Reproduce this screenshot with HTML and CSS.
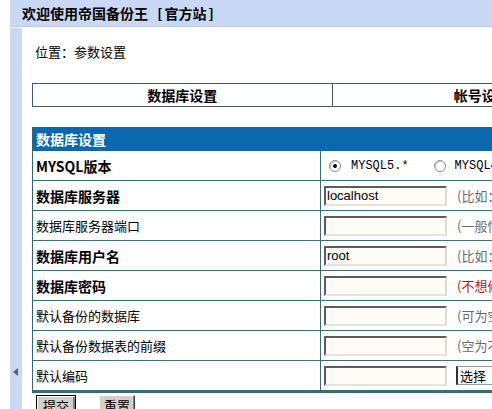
FILE: index.html
```html
<!DOCTYPE html>
<html lang="zh-CN">
<head>
<meta charset="utf-8">
<title>参数设置</title>
<link rel="stylesheet" href="styles.css">
</head>
<body>
<div class="frame">
  <div class="side-gap"></div>
  <div class="shell">
    <div class="topbar">欢迎使用帝国备份王 <span class="br">[</span>官方站<span class="br">]</span></div>
    <div class="main">
      <div class="rail"><span class="arrow"></span></div>
      <div class="content">
        <div class="loc">位置：参数设置</div>
        <div class="tabs">
          <div class="tab">数据库设置</div>
          <div class="tab">帐号设置</div>
        </div>
        <div class="form">
          <div class="form-head">数据库设置</div>
          <div class="row">
            <div class="lbl bold">MYSQL版本</div>
            <div class="val">
              <span class="radio checked"></span><span class="mono">MYSQL5.*</span>
              <span class="radio second"></span><span class="mono">MYSQL4.*</span>
            </div>
          </div>
          <div class="row">
            <div class="lbl bold">数据库服务器</div>
            <div class="val"><span class="field">localhost</span><span class="hint">(比如：localhost)</span></div>
          </div>
          <div class="row">
            <div class="lbl">数据库服务器端口</div>
            <div class="val"><span class="field"></span><span class="hint">(一般情况下为空即可)</span></div>
          </div>
          <div class="row">
            <div class="lbl bold">数据库用户名</div>
            <div class="val"><span class="field">root</span><span class="hint">(比如：root)</span></div>
          </div>
          <div class="row">
            <div class="lbl bold">数据库密码</div>
            <div class="val"><span class="field"></span><span class="hint red">(不想修改请留空)</span></div>
          </div>
          <div class="row">
            <div class="lbl">默认备份的数据库</div>
            <div class="val"><span class="field"></span><span class="hint">(可为空)</span></div>
          </div>
          <div class="row">
            <div class="lbl">默认备份数据表的前缀</div>
            <div class="val"><span class="field"></span><span class="hint">(空为不限)</span></div>
          </div>
          <div class="row">
            <div class="lbl">默认编码</div>
            <div class="val"><span class="field"></span><span class="select">选择</span></div>
          </div>
        </div>
        <div class="btns">
          <span class="btn default">提交</span>
          <span class="btn">重置</span>
        </div>
      </div>
    </div>
  </div>
</div>
</body>
</html>
```

FILE: styles.css
```css
html, body {
  margin: 0;
  padding: 0;
  width: 492px;
  height: 409px;
  overflow: hidden;
  background: #ffffff;
  font-family: "Noto Sans CJK SC", "Liberation Sans", sans-serif;
  font-size: 13px;
  color: #000;
}

.frame {
  display: flex;
  height: 409px;
}

.side-gap {
  flex: none;
  width: 10px;
  background: #ffffff;
}

.shell {
  flex: none;
  width: 700px;
  display: flex;
  flex-direction: column;
  background: #c8d8f5;
}

.topbar {
  height: 28px;
  line-height: 26px;
  padding-left: 12px;
  font-weight: bold;
  font-size: 14px;
  border-bottom: 1px solid #bcc8e6;
  box-sizing: border-box;
  word-spacing: 4px;
}

.topbar .br {
  padding: 0 2px;
}

.main {
  flex: 1;
  display: flex;
  border-top: 1px solid #f4f9ee;
}

.rail {
  flex: none;
  width: 12px;
  background: #c8d8f5;
  padding-top: 340px;
  box-sizing: border-box;
}

.arrow {
  display: block;
  width: 0;
  height: 0;
  margin-left: 3px;
  border-right: 5px solid #5a6070;
  border-top: 4px solid transparent;
  border-bottom: 4px solid transparent;
}

.content {
  flex: none;
  width: 660px;
  background: #ffffff;
  padding: 14px 0 0 10px;
  box-sizing: border-box;
}

.loc {
  height: 20px;
  line-height: 20px;
  padding-left: 3px;
}

.tabs {
  display: flex;
  width: 600px;
  height: 24px;
  margin-top: 21px;
  border: 1px solid #3f5e68;
  box-sizing: border-box;
}

.tab {
  flex: 1;
  text-align: center;
  line-height: 22px;
  font-weight: bold;
  font-size: 14px;
}

.tab + .tab {
  border-left: 1px solid #3f5e68;
}

.form {
  width: 600px;
  margin-top: 20px;
  border-left: 1px solid #2f6a70;
  border-bottom: 2px solid #2f7074;
  box-sizing: border-box;
}

.form-head {
  height: 24px;
  line-height: 24px;
  background: #0c68ae;
  color: #ffffff;
  font-weight: bold;
  font-size: 14px;
  padding-left: 3px;
}

.row {
  display: flex;
  height: 30px;
  border-bottom: 1px solid #3a6e72;
  box-sizing: border-box;
}

.lbl {
  flex: none;
  width: 288px;
  box-sizing: border-box;
  border-right: 1px solid #3a6e72;
  padding-left: 3px;
  display: flex;
  align-items: center;
}

.bold {
  font-weight: bold;
  font-size: 14px;
}

.val {
  flex: 1;
  display: flex;
  align-items: center;
  padding-left: 3px;
  white-space: nowrap;
}

.radio {
  flex: none;
  width: 12px;
  height: 12px;
  box-sizing: border-box;
  border-radius: 50%;
  border: 1px solid #8a8a8a;
  background: #ffffff;
  box-shadow: inset 1px 1px 0 #c8c8c8;
  margin-left: 5px;
  margin-right: 10px;
  position: relative;
}

.radio.checked::after {
  content: "";
  position: absolute;
  left: 3px;
  top: 3px;
  width: 4px;
  height: 4px;
  border-radius: 50%;
  background: #000;
}

.radio.second {
  margin-left: 25px;
  margin-right: 9px;
}

.mono {
  font-family: "Liberation Mono", "DejaVu Sans Mono", monospace;
  font-size: 12px;
}

.field {
  flex: none;
  width: 123px;
  height: 20px;
  box-sizing: border-box;
  border: 2px solid;
  border-color: #5c5c5c #dedbd2 #e6e3da #5c5c5c;
  background: #fcfbf4;
  font-family: "Liberation Sans", sans-serif;
  font-size: 13px;
  line-height: 16px;
  padding-left: 1px;
}

.hint {
  margin-left: 10px;
  color: #6a6a6a;
}

.hint.red {
  color: #b01818;
}

.select {
  margin-left: 9px;
  width: 60px;
  height: 19px;
  line-height: 17px;
  box-sizing: border-box;
  border: 1px solid #9a9a9a;
  border-left: 2px solid #333;
  padding-left: 2px;
  background: #fff;
}

.btns {
  display: flex;
  gap: 23px;
  padding-left: 4px;
  margin-top: 2px;
}

.btn {
  display: inline-block;
  height: 22px;
  line-height: 20px;
  padding: 0 4px;
  box-sizing: border-box;
  background: #d4d0c8;
  border: 1px solid;
  border-color: #ffffff #404040 #404040 #ffffff;
  box-shadow: inset -1px -1px 0 #808080;
  font-size: 13px;
}

.btn.default {
  border: 1px solid #000;
  box-shadow: inset 1px 1px 0 #fff, inset -2px -2px 0 #808080;
  padding: 0 6px;
}
```
